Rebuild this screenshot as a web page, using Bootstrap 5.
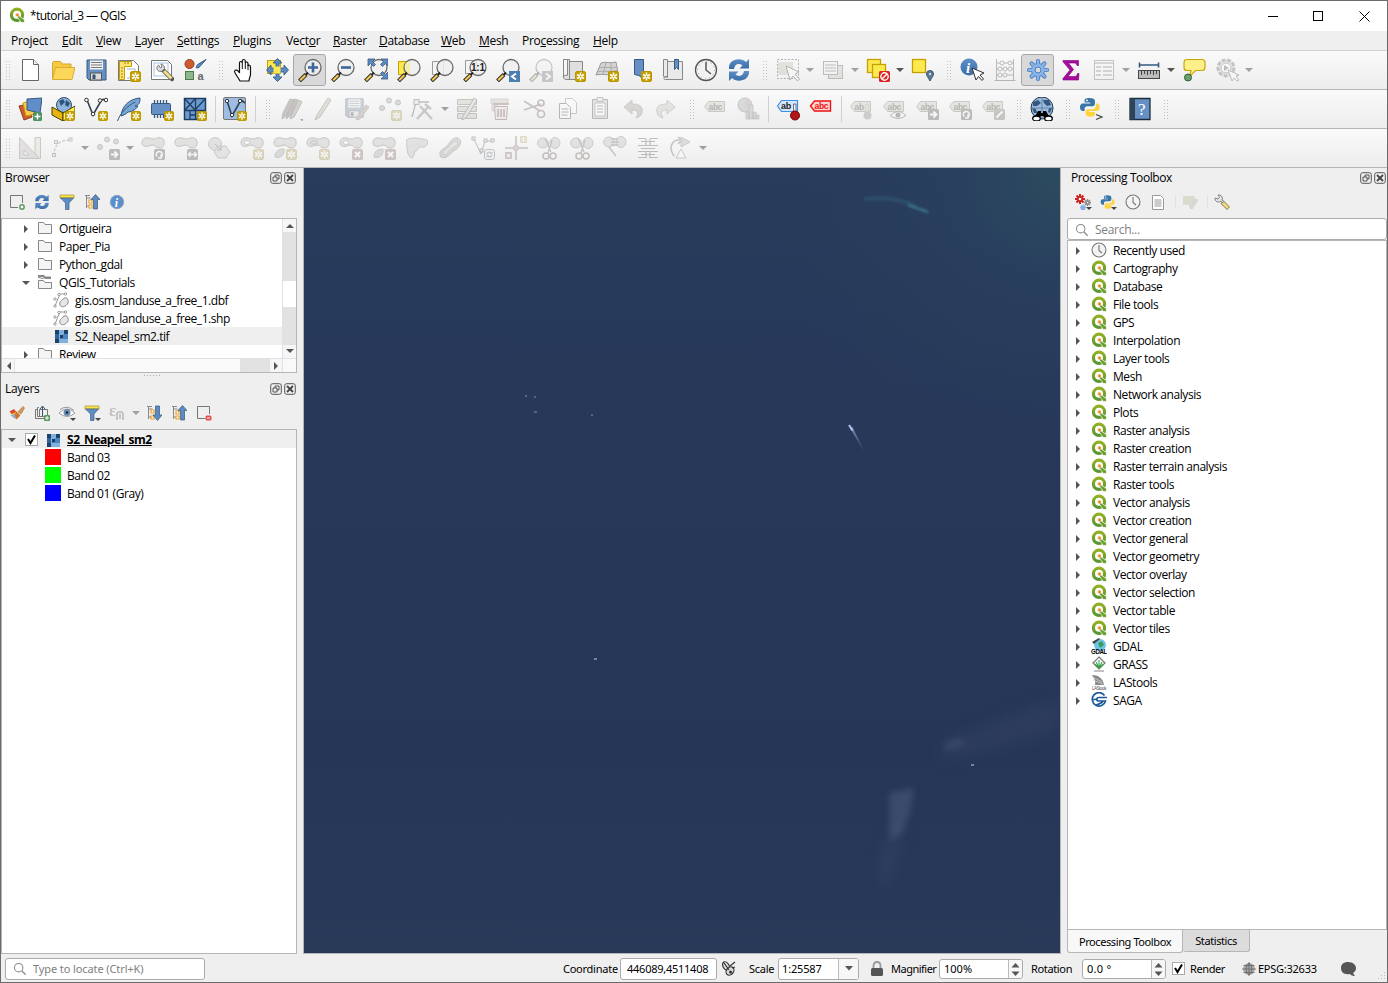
<!DOCTYPE html>
<html lang="en">
<head>
<meta charset="utf-8">
<title>*tutorial_3 — QGIS</title>
<link href="https://cdn.jsdelivr.net/npm/bootstrap@5.3.0/dist/css/bootstrap.min.css" rel="stylesheet">
<style>
html,body{height:983px;overflow:hidden}
body{font:12px/18px "Open Sans","Noto Sans",sans-serif;letter-spacing:-.3px;color:#000;background:#efefef}
.win{width:1388px;height:983px;border:1px solid #6b6b6d}
.titlebar{height:30px;background:#fff;padding-left:8px}
.titlebar .cap{width:46px}
.menubar{height:19px;padding-left:10px;padding-top:1px}
.menubar a{color:#000;text-decoration:none;white-space:nowrap}
.tb{height:39px;border-bottom:1px solid #b6b6b6;background:linear-gradient(#fafafa,#ededed);padding-left:2px}
.tb.first{height:40px;border-top:1px solid #d2d2d2}
.grip{width:16px;height:19px;flex:none;background:repeating-linear-gradient(#c2c2c2 0 1px,transparent 1px 3px) 8px 0/1px 100% no-repeat,repeating-linear-gradient(#c2c2c2 0 1px,transparent 1px 3px) 11px 0/1px 100% no-repeat}
.tb>.grip:first-child{width:10px;background-position:3px 0,6px 0}
.tool{width:33px;height:33px;flex:none;display:flex;align-items:center;justify-content:center}
.tool svg{width:24px;height:24px;overflow:visible}
.tool.on{background:#d9d9d9;border:1px solid #a8a8a8;border-radius:3px;height:32px}
.off{opacity:.34;filter:saturate(.45)}
.dd{width:12px;flex:none;display:flex;justify-content:center}
.dd::after{content:"";border:4px solid transparent;border-top:4px solid #555;border-bottom:0}
.dd.dim::after{border-top-color:#a0a0a0}
.vs{width:7px;height:26px;flex:none;border-left:1px solid #d0d0d0;transform:translateX(4px)}
.ldock{width:302px}
.rdock{width:327px;padding-left:6px;border-left:1px solid #b6b6b6}
.mapview{width:757px;border-left:1px solid #b6b6b6;border-bottom:1px solid #b6b6b6}
.mapview svg{width:756px;height:785px;display:block}
.dhead{height:20px;padding-left:4px}
.dhead svg{width:12px;height:12px;margin-right:2px}
.ldock .dhead svg:last-child{margin-right:7px}
.dtools{height:30px;padding-bottom:2px}
.dtools svg{width:16px;height:16px;flex:none;overflow:visible}
.box{background:#fff;border:1px solid #b6b6b6;overflow:hidden;letter-spacing:-.44px}
.trow{height:18px;white-space:nowrap;display:flex;align-items:center;padding-top:1px}
.trow svg{width:16px;height:16px;flex:none;overflow:visible}
#algs svg,#files svg{margin-top:-1px}
.tw{width:9px;flex:none;display:flex;justify-content:center}
.tw::after{content:"";border:4px solid transparent;border-left:4.5px solid #555;border-right:0}
.tw.open::after{border:4px solid transparent;border-top:4.5px solid #555;border-bottom:0}
.tw.none::after{display:none}
.sb{background:#e2e2e2}
.sbtn{background:#f6f6f6;width:13px;height:14px;display:flex;align-items:center;justify-content:center;flex:none}
.sw{width:16px;height:16px;flex:none;margin-top:-1px}
.chk{width:13px;height:13px;background:#fff;border:1px solid #aaa;flex:none}
.trow .chk svg,.chk svg{width:11px;height:11px;display:block}
.status{height:28px;font:11px/18px "Noto Sans","Open Sans",sans-serif;letter-spacing:-.25px;white-space:nowrap}
.fld{height:22px;background:#fff;border:1px solid #ababab;border-radius:3px;display:flex;align-items:center;overflow:hidden;padding-top:1px}
.spin{width:14px;height:20px;border-left:1px solid #bbb;background:#f7f7f7;margin-top:-1px}
.stab{height:23px;font:11px/21px "Noto Sans","Open Sans",sans-serif;letter-spacing:-.4px;text-align:center;border:1px solid #b6b6b6;border-top:0;border-radius:0 0 3px 3px}
.muted{color:#808080}
</style>
</head>
<body>
<svg width="0" height="0" class="position-absolute">
<defs>
<linearGradient id="gq" x1="0" y1="0" x2="0" y2="1"><stop offset="0" stop-color="#93b023"/><stop offset="1" stop-color="#589632"/></linearGradient>
<linearGradient id="gb" x1="0" y1="0" x2="0" y2="1"><stop offset="0" stop-color="#5d90c8"/><stop offset="1" stop-color="#3a6ba5"/></linearGradient>
<symbol id="star" viewBox="0 0 11 11"><rect x=".5" y=".5" width="10" height="10" rx="1.5" fill="#c4a000" stroke="#b89600"/><path d="M5.500 1.500v8M2 3.500l7 4M9 3.500l-7 4" stroke="#fff" stroke-width="1.500"/><circle cx="5.500" cy="5.500" r=".9" fill="#c4a000"/></symbol>
<symbol id="bx" viewBox="0 0 11 11"><rect width="11" height="11" rx="1.500" fill="#a86868"/><path d="M3 3l5 5M8 3L3 8" stroke="#fff" stroke-width="2"/></symbol>
<symbol id="barr" viewBox="0 0 11 11"><rect width="11" height="11" rx="1.500" fill="#555"/><path d="M2 5.500h6M5.500 2.500l3 3-3 3" stroke="#fff" stroke-width="1.800" fill="none"/></symbol>
<symbol id="brot" viewBox="0 0 11 11"><rect width="11" height="11" rx="1.500" fill="#555"/><path d="M3 7.500A3 3 0 1 1 7 8M7 5.500V9H4" stroke="#fff" stroke-width="1.500" fill="none"/></symbol>
<symbol id="q" viewBox="0 0 16 16"><circle cx="8" cy="7.800" r="5.600" fill="#fff" stroke="url(#gq)" stroke-width="3.200"/><path d="M9.500 8.500l6 4.200v2.800h-3.200L8.300 10z" fill="#6c9f2c" stroke="#fff" stroke-width=".7"/><circle cx="8.300" cy="7.800" r="2" fill="#f9cfa0"/><circle cx="8.500" cy="8" r="1.200" fill="#ee7913"/></symbol>
<symbol id="lens" viewBox="0 0 24 24"><circle cx="15" cy="9.500" r="8" fill="#eee" fill-opacity=".85" stroke="#6a6a6a" stroke-width="1.300"/><path d="M10 14.500l-2.500 2.500" stroke="#222" stroke-width="2"/><path d="M8 16.500L1.500 23" stroke="#333" stroke-width="4"/><path d="M7.300 17.200L2.200 22.300" stroke="#fcc94f" stroke-width="2"/></symbol>
<symbol id="sync" viewBox="0 0 24 24"><path d="M2 11C1 1 14-1 19 4l3-3v9.500h-9.500l3-3c-4-3-8-1-8.500 3.500z" fill="url(#gb)"/><path d="M22 13c1 10-12 12-17 7l-3 3v-9.500h9.500l-3 3c4 3 8 1 8.500-3.500z" fill="url(#gb)"/></symbol>
<symbol id="new" viewBox="0 0 24 24"><path d="M4.500 1.500h11l5 5v16h-16z" fill="#fff" stroke="#666"/><path d="M15.500 1.500v5h5" fill="#eee" stroke="#666"/></symbol>
<symbol id="open" viewBox="0 0 24 24"><path d="M1.500 21V4.500l1-1h7l2 2.500H20v3" fill="#f6c93f" stroke="#d5a52c"/><path d="M1.500 21.500l3-12H24l-3 12z" fill="#fbd859" stroke="#d9ab33"/></symbol>
<symbol id="save" viewBox="0 0 24 24"><path d="M3 2h19v20H5l-2-2z" fill="#6690c3" stroke="#36597f"/><rect x="6" y="2.500" width="13" height="9" fill="#f4f4f4"/><path d="M7 4.500h11M7 7h11M7 9.500h11" stroke="#777"/><rect x="6.500" y="15" width="11" height="7" fill="#dcdcdc" stroke="#555"/><rect x="8.500" y="16.500" width="3" height="4.500" fill="#34536f"/></symbol>
<symbol id="layout" viewBox="0 0 24 24"><path d="M1.500 2.500h15l5 5v15h-20z" fill="#fff" stroke="#777"/><path d="M2.500 3.500h12v5h-7v13h-5z" fill="#fce372" stroke="#c4a000"/><path d="M4 10h2M4 13h2M4 16h2M4 19h2M8 4v2M11 4v2" stroke="#a08000"/><path d="M10 11h8v9h-8" fill="none" stroke="#96b4dc"/><use href="#star" x="13" y="13" width="11" height="11"/></symbol>
<symbol id="layman" viewBox="0 0 24 24"><path d="M1.500 2.500h16l4 4v15h-20z" fill="#fff" stroke="#777"/><rect x="4" y="5" width="14" height="13" fill="none" stroke="#a9bfdf"/><path d="M13 12l9 9" stroke="#555" stroke-width="4.500" stroke-linecap="round"/><path d="M14 13l7.500 7.500" stroke="#f3de84" stroke-width="3"/><path d="M8.500 7a3.500 3.500 0 1 0 5 4.500l1-1A4 4 0 0 0 11 6l1 3-1.500 1z" fill="#ddd" stroke="#777"/></symbol>
<symbol id="style" viewBox="0 0 24 24"><circle cx="6.500" cy="6" r="4.500" fill="#cf5a30" stroke="#8d3e20"/><path d="M13 9.500c1 1 3 0 4-1L23 1.500 15.500 6c-2 1-1.500 2-2.500 3.500z" fill="#5b8ac0" stroke="#36597f"/><rect x="2.500" y="13.500" width="8" height="8" fill="#8fb58f" stroke="#4e7a4e"/><text x="14.500" y="21.500" font-size="11" font-family="Liberation Sans" font-weight="700" fill="#666">a</text></symbol>
<symbol id="hand" viewBox="0 0 24 24"><path d="M8 23C6 19 3 16 2.500 13.500 3 11 6 12 7.500 15V5c0-2 2.500-2 2.800 0V3c0-2 2.700-2 3 0v2c.5-1.500 2.500-1.300 2.700.5V8c.5-1.300 2.500-1 2.500 1v7c0 3-1.500 4-1.500 7z" fill="#fff" stroke="#111" stroke-width="1.200"/><path d="M10.300 5v6M13.300 5v6M16 7v5" stroke="#111"/></symbol>
<symbol id="panmap" viewBox="0 0 24 24"><rect x="2.500" y="2.500" width="13" height="13" fill="#fce94f" stroke="#c4a000"/><path d="M12.500.5L17 5h-3v5h5V7l4.500 5L19 17v-3h-5v5h3l-4.500 4.500L8 19h3v-5H6v3l-4.500-5L6 7v3h5V5H8z" fill="#5b8bc1" stroke="#2f5580" stroke-width=".8"/><path d="M8.500 8.500h7v7h-7z" fill="#fce94f"/></symbol>
<symbol id="zin" viewBox="0 0 24 24"><use href="#lens"/><path d="M15 4.500v10M10 9.500h10" stroke="#3e6798" stroke-width="2.600"/></symbol>
<symbol id="zout" viewBox="0 0 24 24"><use href="#lens"/><path d="M10 9.500h10" stroke="#3e6798" stroke-width="2.600"/></symbol>
<symbol id="zfull" viewBox="0 0 24 24"><use href="#lens"/><path d="M4 1h7L8.500 3.500l3 3-2 2-3-3L4 8zM24 1h-7l2.500 2.500-3 3 2 2 3-3L24 8zM24 21h-7l2.500-2.500-3-3 2-2 3 3L24 14z" fill="#5b8bc1" stroke="#36597f" stroke-width=".8"/></symbol>
<symbol id="zsel" viewBox="0 0 24 24"><path d="M1.500 3.500h11v13h-11z" fill="#fce94f" stroke="#c4a000"/><use href="#lens"/><path d="M9 4.500h4v11c-6-2-6-8-4-11z" fill="#f5ee9c" opacity=".8"/></symbol>
<symbol id="zlay" viewBox="0 0 24 24"><path d="M2.500 3.500h11v13h-11z" fill="#f4f4f4" stroke="#999"/><use href="#lens"/></symbol>
<symbol id="znat" viewBox="0 0 24 24"><path d="M2.500 2.500h11v13h-11z" fill="#f4f4f4" stroke="#999"/><use href="#lens"/><text x="8" y="13" font-size="10" font-weight="700" font-family="Liberation Sans" fill="#222" letter-spacing="-.2">1:1</text></symbol>
<symbol id="zlast" viewBox="0 0 24 24"><use href="#lens"/><rect x="13" y="13" width="11" height="11" fill="#4c7db3"/><path d="M20 15.500l-4 3 4 3" fill="none" stroke="#fff" stroke-width="2"/></symbol>
<symbol id="znext" viewBox="0 0 24 24"><use href="#lens"/><rect x="13" y="13" width="11" height="11" fill="#777"/><path d="M17 15.500l4 3-4 3" fill="none" stroke="#fff" stroke-width="2"/></symbol>
<symbol id="nmap" viewBox="0 0 24 24"><path d="M1.500 1.500h6v20h-3c-4 0-3-4-3-4zM7.500 3.500h13v18h-16" fill="#dfdfdf" stroke="#888"/><path d="M1.500 1.500h4v16c-2-1-4 0-4 2z" fill="#f5f5f5" stroke="#888"/><use href="#star" x="13" y="13" width="11" height="11"/></symbol>
<symbol id="n3d" viewBox="0 0 24 24"><path d="M6 5c5-2 9 1 15-1l2 11c-7 4-14 0-22 2z" fill="#d4d4d4" stroke="#999"/><path d="M4 10c6-2 12 1 18-1M2 14c6-2 13 1 21-2M11 4.500L8 16M16 5v12" stroke="#aaa" fill="none"/><use href="#star" x="13" y="13" width="11" height="11"/></symbol>
<symbol id="nbm" viewBox="0 0 24 24"><path d="M6.500 1.500h9v20l-4.500-4-4.500-1z" fill="#6690c3" stroke="#36597f"/><use href="#star" x="13" y="13" width="11" height="11"/></symbol>
<symbol id="bms" viewBox="0 0 24 24"><path d="M2.500 1.500h4v18c-2-1-4-1-4-1zM6.500 3.500h15v18h-17c-3 0-2-3 2-3z" fill="#e9e9e9" stroke="#888"/><path d="M13.500 1.500h4v10l-2-2-2 2z" fill="#6690c3" stroke="#36597f"/></symbol>
<symbol id="clock" viewBox="0 0 24 24"><circle cx="12" cy="12" r="10.500" fill="#f2f2f2" stroke="#555" stroke-width="1.300"/><path d="M12 4v8l5 4" fill="none" stroke="#555" stroke-width="1.500"/><circle cx="12" cy="12" r="8.500" fill="none" stroke="#6d9dd0" stroke-dasharray="1 3.450"/></symbol>
<symbol id="selr" viewBox="0 0 24 24"><rect x="1.500" y="1.500" width="21" height="19" fill="none" stroke="#333" stroke-dasharray="2 1.500"/><rect x="2" y="4" width="15" height="13" fill="#c5bd95"/><path d="M10 8l4 14 3-4 4.500 5 2-2-4.500-5 4-2z" fill="#fff" stroke="#333"/></symbol>
<symbol id="self" viewBox="0 0 24 24"><rect x="7.500" y="7.500" width="14" height="13" fill="#c9c5a8" stroke="#555"/><rect x="2.500" y="3.500" width="14" height="13" fill="#f2f2f2" stroke="#555"/><path d="M4 7h11M4 10h11M4 13h11" stroke="#555"/></symbol>
<symbol id="desel" viewBox="0 0 24 24"><rect x="1.500" y="1.500" width="13" height="13" fill="#fce94f" stroke="#c4a000" stroke-width="1.300"/><rect x="6.500" y="6.500" width="13" height="13" fill="#fce94f" stroke="#c4a000" stroke-width="1.300"/><rect x="13" y="13" width="11" height="11" rx="1.500" fill="#d22"/><circle cx="18.500" cy="18.500" r="3.700" fill="none" stroke="#fff" stroke-width="1.400"/><path d="M16 21l5-5" stroke="#fff" stroke-width="1.400"/></symbol>
<symbol id="sloc" viewBox="0 0 24 24"><rect x="1.500" y="1.500" width="13" height="13" fill="#fce94f" stroke="#c4a000" stroke-width="1.300"/><path d="M19 23c-2-4-3.500-5-3.500-7a3.500 3.500 0 0 1 7 0c0 2-1.500 3-3.500 7z" fill="#5c7a93" stroke="#3c5870"/><circle cx="19" cy="16" r="1" fill="#fff"/></symbol>
<symbol id="ident" viewBox="0 0 24 24"><circle cx="9" cy="9" r="8.500" fill="url(#gb)"/><text x="6" y="14.500" font-size="15" font-style="italic" font-weight="700" font-family="Liberation Serif" fill="#fff">i</text><path d="M12 10l4 12 2.500-3.500 3.500 4 1.500-1.500-3.500-4 4-2z" fill="#fff" stroke="#333"/></symbol>
<symbol id="abac" viewBox="0 0 24 24"><path d="M3.500 1v21M20.500 1v21M1.500 22.500h21M3.500 5h17M3.500 11h17M3.500 17h17" stroke="#444" fill="none"/><g fill="#fff" stroke="#444"><circle cx="9" cy="5" r="2"/><circle cx="17" cy="5" r="2"/><circle cx="7" cy="11" r="2"/><circle cx="12" cy="11" r="2"/><circle cx="17" cy="11" r="2"/><circle cx="7" cy="17" r="2"/><circle cx="12" cy="17" r="2"/></g></symbol>
<symbol id="gear" viewBox="0 0 24 24"><g stroke="#4a7ec0" stroke-width="4.200" stroke-linecap="round"><path d="M12 3v18M3 12h18M5.600 5.600l12.800 12.800M18.400 5.600L5.600 18.400"/></g><circle cx="12" cy="12" r="7" fill="#4a7ec0"/><g stroke="#8ab4e8" stroke-width="2.400" stroke-linecap="round"><path d="M12 3v18M3 12h18M5.600 5.600l12.800 12.800M18.400 5.600L5.600 18.400"/></g><circle cx="12" cy="12" r="6.200" fill="#8ab4e8"/><circle cx="12" cy="12" r="3" fill="#d9d9d9" stroke="#4a7ec0"/></symbol>
<symbol id="sigma" viewBox="0 0 24 24"><path d="M4 2.500h15.500v5H18C17.500 5 16 5 14 5H9.500l5 6.500L9 18.500h6c2 0 3-.5 3.500-3H20l-.5 6.500H4v-1.500l7-8.500-7-8.200z" fill="#a80aa0" stroke="#7b0476" stroke-width=".6"/></symbol>
<symbol id="table" viewBox="0 0 24 24"><rect x="2.500" y="2.500" width="19" height="19" fill="#f6f6f6" stroke="#666"/><path d="M3 5h19M4 9h5M11 9h9M4 13h5M11 13h9M4 17h5M11 17h9" stroke="#777" stroke-width="1.500"/></symbol>
<symbol id="ruler" viewBox="0 0 24 24"><path d="M2 7h20M2.500 4.500v5M21.500 4.500v5" stroke="#36597f" stroke-width="1.600"/><rect x="1.500" y="12.500" width="21" height="8" fill="#bbb" stroke="#444"/><path d="M4.500 13v4M7.500 13v3M10.500 13v4M13.500 13v3M16.500 13v4M19.500 13v3" stroke="#444"/></symbol>
<symbol id="tip" viewBox="0 0 24 24"><path d="M5 1.500h15q3 0 3 3v5q0 3-3 3h-6.500l-6 6 1.500-6H5q-3 0-3-3v-5q0-3 3-3z" fill="#fdf08a" stroke="#c8a60a" stroke-width="1.200"/><circle cx="6" cy="19.500" r="3.500" fill="#6ba06b" stroke="#345a34"/></symbol>
<symbol id="act" viewBox="0 0 24 24"><circle cx="11" cy="10" r="8" fill="#ccc" stroke="#666" stroke-width="3" stroke-dasharray="4 1.500"/><circle cx="11" cy="10" r="5" fill="#fff" stroke="#666"/><path d="M9 7l5 3-5 3z" fill="#555"/><path d="M13 12l4 11 2-3 3 3 2-1-3-4 3-1z" fill="#fff" stroke="#555"/></symbol>
<symbol id="dsm" viewBox="0 0 24 24"><path d="M1 9l9-2 4 13-8 3z" fill="#cf5a30" stroke="#8d3e20"/><path d="M5 6l10-3 3 14-10 2z" fill="#fcc94f" stroke="#c4a000"/><path d="M9 2l15-1-2 15-13-3z" fill="#5f8fc6" stroke="#36597f"/><rect x="15" y="15" width="9" height="9" rx="1.500" fill="#4f9162"/><path d="M19.500 16.500v6M16.500 19.500h6" stroke="#fff" stroke-width="1.500"/></symbol>
<symbol id="gpkg" viewBox="0 0 24 24"><circle cx="13" cy="8" r="7.500" fill="#8fb4da" stroke="#2d4f73"/><path d="M8 4l4-2 2 3-4 4zM15 3l4 3-2 4-3-2z" fill="#2f527a"/><path d="M1 10l11 6v8L1 18z" fill="#e8b50e" stroke="#4b3c00"/><path d="M24 9l-12 7v8l12-6z" fill="#fcef5b" stroke="#4b3c00"/><use href="#star" x="14" y="14" width="10" height="10"/></symbol>
<symbol id="shp" viewBox="0 0 24 24"><path d="M3 3l6 15L17 4c2-3 4-1 5 0" fill="none" stroke="#333f50" stroke-width="1.600"/><g fill="#fff" stroke="#333"><circle cx="2.500" cy="3" r="1.800"/><circle cx="9" cy="17" r="1.800"/><circle cx="16" cy="3.500" r="1.800"/><circle cx="22" cy="3" r="1.800"/></g><use href="#star" x="14" y="14" width="10" height="10"/></symbol>
<symbol id="feather" viewBox="0 0 24 24"><path d="M4 19C5 9 12 2 23 1c0 5-1 7-5 8l3 0c-3 5-8 6-10 6-2 2-4 3-7 4z" fill="#7aa6d6" stroke="#2f5580"/><path d="M.5 24c3-8 9-15 18-19" stroke="#2f5580" fill="none"/><use href="#star" x="14" y="14" width="10" height="10"/></symbol>
<symbol id="mem" viewBox="0 0 24 24"><path d="M4.500 3v18M7.500 3v18M10.500 3v18M13.500 3v18M16.500 3v18" stroke="#36597f" stroke-width="1.300"/><rect x="1.500" y="6.500" width="19" height="11" rx="1" fill="#6690c3" stroke="#36597f"/><use href="#star" x="14" y="14" width="10" height="10"/></symbol>
<symbol id="virt" viewBox="0 0 24 24"><rect x="1.500" y="1.500" width="21" height="21" fill="#6b9bd1" stroke="#1f3d61" stroke-width="1.500"/><path d="M12.500 2v21M2 13.500h20M2 2l10 11M2 13L12 2M12 13L22 2M7 13v10M7 18h5" fill="none" stroke="#1f3d61" stroke-width="1.300"/><use href="#star" x="14" y="14" width="10" height="10"/></symbol>
<symbol id="virt2" viewBox="0 0 24 24"><rect x=".5" y=".5" width="22" height="22" rx="1.500" fill="#9fbde0" stroke="#777"/><path d="M4 4l5 15L18 3l4 3" fill="none" stroke="#2d4460" stroke-width="1.600"/><g fill="#fff" stroke="#333"><circle cx="4" cy="4" r="1.700"/><circle cx="9" cy="18" r="1.700"/><circle cx="17" cy="4" r="1.700"/></g><use href="#star" x="14" y="14" width="10" height="10"/></symbol>
<symbol id="pens" viewBox="0 0 24 24"><path d="M4 16L11 2l4 1L8 18l-5 4z" fill="#8a6a5a" stroke="#555"/><path d="M8 18L15 2l4 1-7 15-5 4z" fill="#7a5f50" stroke="#555"/><path d="M12 19l8-16 3 2-8 15-4 2z" fill="#a39770" stroke="#555"/><path d="M21 22h6l-3 3z" fill="#222"/></symbol>
<symbol id="pen" viewBox="0 0 24 24"><path d="M5 18L16 1l3 2L8 20l-5 3z" fill="#c2b878" stroke="#666"/></symbol>
<symbol id="saveed" viewBox="0 0 24 24"><use href="#save" x="-2" y="0" width="22" height="22"/><path d="M12 20l9-12 3 2-9 12-4 1z" fill="#b58a7a" stroke="#777"/></symbol>
<symbol id="pts" viewBox="0 0 24 24"><g fill="#aaa" stroke="#666"><circle cx="11" cy="3.500" r="2.500"/><circle cx="20" cy="5.500" r="2.500"/><circle cx="4" cy="11" r="2.500"/></g></symbol>
<symbol id="addpt" viewBox="0 0 24 24"><use href="#pts"/><use href="#star" x="13" y="13" width="11" height="11"/></symbol>
<symbol id="mvpt" viewBox="0 0 24 24"><use href="#pts"/><use href="#barr" x="13" y="13" width="11" height="11"/></symbol>
<symbol id="vert" viewBox="0 0 24 24"><path d="M1 20L5 5h13" fill="none" stroke="#555" stroke-width="1.300"/><rect x="3" y="2.500" width="5" height="5" fill="#ddd" stroke="#555"/><path d="M6 22L17 10M9 9l12 13M14 7l6 5" stroke="#777" stroke-width="2.500"/></symbol>
<symbol id="edattr" viewBox="0 0 24 24"><path d="M1.500 2.500h19v5h-19zM1.500 9.500h19v5h-19zM1.500 16.500h19v5h-19z" fill="#c8c39f" stroke="#666"/><path d="M7 19L18 1l3 2L10 21l-4 2z" fill="#ccc" stroke="#555"/></symbol>
<symbol id="trash" viewBox="0 0 24 24"><path d="M2 2h17v5H2zM3 8h5v6H3z" fill="#c8c39f" stroke="#999"/><path d="M5.500 9.500h13l-1 13h-11z" fill="#ddd" stroke="#a33"/><path d="M4 7h16M9 12v8M12 12v8M15 12v8" stroke="#a33" stroke-width="1.500"/></symbol>
<symbol id="cut" viewBox="0 0 24 24"><path d="M2 4l16 10M2 13l17-6" stroke="#666" stroke-width="1.800"/><circle cx="19" cy="6" r="3" fill="none" stroke="#855" stroke-width="1.700"/><circle cx="19" cy="17" r="3.500" fill="none" stroke="#855" stroke-width="1.700"/></symbol>
<symbol id="copy" viewBox="0 0 24 24"><path d="M10.500 1.500h7l4 4v11h-11z" fill="#fff" stroke="#777"/><path d="M4.500 6.500h7l4 4v11h-11z" fill="#fff" stroke="#444"/><path d="M6.500 12h7M6.500 15h7M6.500 18h6" stroke="#444"/></symbol>
<symbol id="paste" viewBox="0 0 24 24"><path d="M4.500 2.500h15v19h-15z" fill="#c9c5b0" stroke="#444"/><path d="M7 6h10v13H7z" fill="#fff" stroke="#777"/><path d="M9 .5h6v4H9z" fill="#ddd" stroke="#666"/><path d="M9 9h6M9 12h6M9 15h6" stroke="#444"/></symbol>
<symbol id="undo" viewBox="0 0 24 24"><path d="M3 10l8-7v4c7 0 11 2 10 8-.5 4-3 5-6 6 3-5 2-8-4-8v4z" fill="#b5978a" stroke="#876"/></symbol>
<symbol id="redo" viewBox="0 0 24 24"><path d="M21 10l-8-7v4C6 7 2 9 3 15c.5 4 3 5 6 6-3-5-2-8 4-8v4z" fill="#bcc5b8" stroke="#787"/></symbol>
<symbol id="tag" viewBox="0 0 24 24"><path d="M1.500 9.500l4-5h16v10h-16z" fill="#cbc69f" stroke="#777"/><text x="5.500" y="12.500" font-size="8.500" font-weight="700" font-family="Liberation Sans" fill="#333">abc</text></symbol>
<symbol id="tagab" viewBox="0 0 24 24"><path d="M1.500 9.500l4-5h16v10h-16z" fill="#cbc69f" stroke="#777"/><text x="5.500" y="12.500" font-size="8.500" font-weight="700" font-family="Liberation Sans" fill="#333">ab</text><path d="M17 7h2v9h-2z" fill="#eee" stroke="#666" stroke-width=".7"/><circle cx="18.500" cy="18.500" r="4" fill="#888"/></symbol>
<symbol id="tagblue" viewBox="0 0 24 24"><path d="M1.500 9l4-5.500h16v11h-16z" fill="#d3e6fb" stroke="#3b8fee" stroke-width="1.200"/><text x="5" y="12" font-size="9" font-weight="700" font-family="Liberation Sans" fill="#222">ab</text><path d="M17.500 7h2.500v9h-2.500z" fill="#eee" stroke="#444" stroke-width=".7"/><circle cx="19" cy="18.500" r="4.500" fill="#b01818" stroke="#700"/></symbol>
<symbol id="tagred" viewBox="0 0 24 24"><path d="M1.500 9l4-5h16v10h-16z" fill="#fbd5d5" stroke="#e11" stroke-width="1.400"/><text x="5.500" y="12" font-size="8.500" font-weight="700" font-family="Liberation Sans" fill="#e11">abc</text></symbol>
<symbol id="tageye" viewBox="0 0 24 24"><use href="#tag"/><path d="M8 18.500q8-8 16 0-8 6-16 0z" fill="#fff" stroke="#444"/><circle cx="16" cy="18" r="2.500" fill="#444"/></symbol>
<symbol id="tagarr" viewBox="0 0 24 24"><use href="#tag"/><use href="#barr" x="13" y="12" width="11" height="11"/></symbol>
<symbol id="tagrot" viewBox="0 0 24 24"><use href="#tag"/><use href="#brot" x="13" y="12" width="11" height="11"/></symbol>
<symbol id="taged" viewBox="0 0 24 24"><use href="#tag"/><rect x="13" y="12" width="11" height="11" rx="1.500" fill="#7a744f"/><path d="M15.500 20.500l6-6" stroke="#fff" stroke-width="2"/></symbol>
<symbol id="diag" viewBox="0 0 24 24"><circle cx="9" cy="8" r="7" fill="#96aa90" stroke="#666"/><path d="M9 8V1a7 7 0 0 1 5.500 11z" fill="#b58a8a"/><path d="M13 8h4v14h-4zM17 15h3v7h-3zM20 18h3v4h-3zM10 15h3v7h-3z" fill="#9aa" stroke="#666" stroke-width=".7"/></symbol>
<symbol id="meta" viewBox="0 0 24 24"><circle cx="12" cy="11" r="11" fill="#9dbadb" stroke="#20394f"/><path d="M3 5l5-2 3 3-4 3-4 0zM13 3l6 0 2 5-4 1-3-3zM2 11l4 1 1 4-3 0zM19 11l3 0-2 5-2-1z" fill="#33577f"/><path d="M1 11h22M12 0v22" fill="none" stroke="#4b7097" stroke-width=".7"/><path d="M4 21l4-7h3v2h2v-2h3l4 7-3 2-4-4h-2l-4 4z" fill="#000"/><ellipse cx="6.500" cy="21.500" rx="3.800" ry="2.500" fill="#fff" stroke="#000" stroke-width="1.300"/><ellipse cx="18.500" cy="21.500" rx="3.800" ry="2.500" fill="#fff" stroke="#000" stroke-width="1.300"/></symbol>
<symbol id="py" viewBox="0 0 24 24"><path d="M11 2c-4 0-5 1-5 3v2h6v1H4c-2 0-3 2-3 4s1 4 3 4h2v-2c0-2 1-3 3-3h5c2 0 3-1 3-3V5c0-2-2-3-6-3z" fill="#3a76a8"/><circle cx="8.500" cy="4.700" r="1" fill="#fff"/><path d="M12 22c4 0 5-1 5-3v-2h-6v-1h8c2 0 3-2 3-4s-1-4-3-4h-1v2c0 2-1 4-3 4h-5c-2 0-3 1-3 3v2c0 2 2 3 5 3z" fill="#ffd43b"/></symbol>
<symbol id="pyc" viewBox="0 0 24 24"><use href="#py" x="0" y="-1" width="22.500" height="22.500"/><path d="M17 17.500l6 2.500-6 2.500" fill="none" stroke="#444" stroke-width="1.300"/></symbol>
<symbol id="help" viewBox="0 0 24 24"><path d="M2 1.500h20v21H2z" fill="#6690c3" stroke="#1c2c3c" stroke-width="1.300"/><path d="M2 1.500h5v21H2z" fill="#2f4457"/><text x="10" y="18" font-size="17" font-family="Liberation Serif" fill="#fff">?</text></symbol>
<symbol id="tri" viewBox="0 0 24 24"><path d="M17 1.500h5.500v21H17z" fill="#ded8ac" stroke="#777"/><path d="M1.500 1.500l20 21h-20z" fill="#cbbab0" stroke="#777"/><path d="M6 14l5 5H6z" fill="#fff" stroke="#777"/></symbol>
<symbol id="curve" viewBox="0 0 24 24"><path d="M3 20C3 9 8 4 20 4" fill="none" stroke="#777" stroke-dasharray="3 1.500" stroke-width="1.300"/><g fill="#ddd" stroke="#666"><rect x="1.500" y="17.500" width="3" height="3"/><rect x="3.500" y="4.500" width="3" height="3"/><rect x="18" y="2" width="3" height="3"/></g></symbol>
<symbol id="blob" viewBox="0 0 24 24"><path d="M1 6C2 0 8 2 12 3c4 0 6-3 10 0 3 4 0 10-4 9-4 0-3-3-7-3-4 1-5 2-8 1C1 9 1 8 1 6z" fill="#b9c0b4" stroke="#666"/></symbol>
<symbol id="blrot" viewBox="0 0 24 24"><use href="#blob"/><use href="#brot" x="13" y="13" width="11" height="11"/></symbol>
<symbol id="blsc" viewBox="0 0 24 24"><use href="#blob"/><rect x="13" y="13" width="11" height="11" rx="1.500" fill="#555"/><path d="M14 18.500h9M16.500 16l-2 2.500 2 2.500M20.500 16l2 2.500-2 2.500" stroke="#fff" stroke-width="1.300" fill="none"/></symbol>
<symbol id="simp" viewBox="0 0 24 24"><circle cx="8" cy="8" r="6.500" fill="#b9c0b4" stroke="#777"/><path d="M11 10h8l4 6-4 6h-8l-4-6z" fill="#c5cac0" stroke="#777"/><path d="M8 8l6 6m0-4v4h-4" fill="none" stroke="#555"/></symbol>
<symbol id="ring" viewBox="0 0 24 24"><use href="#blob"/><ellipse cx="7" cy="6.500" rx="3" ry="2" fill="#fff" stroke="#777"/><use href="#star" x="13" y="13" width="11" height="11"/></symbol>
<symbol id="part" viewBox="0 0 24 24"><use href="#blob"/><path d="M2 21c0-6 4-8 9-8 1 6-4 10-9 8z" fill="#a5b09f" stroke="#777"/><use href="#star" x="13" y="13" width="11" height="11"/></symbol>
<symbol id="fill" viewBox="0 0 24 24"><use href="#blob"/><ellipse cx="8" cy="6.500" rx="4" ry="2" fill="#aaa" stroke="#777"/><use href="#star" x="13" y="13" width="11" height="11"/></symbol>
<symbol id="dring" viewBox="0 0 24 24"><use href="#blob"/><ellipse cx="7" cy="6.500" rx="3" ry="2" fill="#fff" stroke="#777"/><use href="#bx" x="13" y="13" width="11" height="11"/></symbol>
<symbol id="dpart" viewBox="0 0 24 24"><use href="#blob"/><path d="M2 21c0-6 4-8 9-8 1 6-4 10-9 8z" fill="#a5b09f" stroke="#777"/><use href="#bx" x="13" y="13" width="11" height="11"/></symbol>
<symbol id="resh" viewBox="0 0 24 24"><path d="M1.500 4C6 0 18 3 22 4c2 4-1 8-6 7-4 0-2 4-6 4-1 3-1 6-3 7C2 20 2 14 1.500 4z" fill="#b9c0b4" stroke="#777"/></symbol>
<symbol id="offs" viewBox="0 0 24 24"><path d="M3 21c-4-6 3-8 6-11s5-9 11-8c5 3 2 9-3 12s-8 10-14 7z" fill="#a9ad98" stroke="#666"/><path d="M5.500 19c-2-4 2-5 5-8s4-6 8.500-6c2 2 0 5-4 7s-5.500 8-9.500 7z" fill="#c5c9be" stroke="#777"/></symbol>
<symbol id="splv" viewBox="0 0 24 24"><path d="M3 3l7 15 4-13h8" fill="none" stroke="#555"/><g fill="#ddd" stroke="#555"><rect x="1" y="1" width="3" height="3"/><rect x="9" y="13" width="3" height="3"/><rect x="13" y="3" width="3" height="3"/><rect x="20" y="3" width="3" height="3"/></g><rect x="13.500" y="13.500" width="10" height="10" rx="2" fill="#eee" stroke="#666"/><use href="#sync" x="15" y="15" width="7" height="7"/></symbol>
<symbol id="merge" viewBox="0 0 24 24"><path d="M12 0v10M1 12h9M14 12h10M12 14v10" stroke="#666" stroke-width="1.500"/><rect x="10" y="10" width="4" height="4" fill="#d99" stroke="#a66"/><use href="#star" x="16" y="0" width="7" height="7"/><use href="#bx" x="1" y="16" width="7" height="7"/></symbol>
<symbol id="split" viewBox="0 0 24 24"><ellipse cx="6" cy="7" rx="5.500" ry="5" fill="#b9c0b4" stroke="#777"/><ellipse cx="18" cy="7" rx="5" ry="5.500" fill="#b9c0b4" stroke="#777"/><path d="M8 2l6 14M15 4l-4 13" stroke="#666" stroke-width="1.300"/><circle cx="9" cy="20" r="3" fill="none" stroke="#855" stroke-width="1.500"/><circle cx="16" cy="20" r="3" fill="none" stroke="#855" stroke-width="1.500"/></symbol>
<symbol id="mfeat" viewBox="0 0 24 24"><ellipse cx="6" cy="6" rx="5.500" ry="5" fill="#b9c0b4" stroke="#777"/><ellipse cx="18" cy="6" rx="5" ry="5.500" fill="#b9c0b4" stroke="#777"/><path d="M8 6h8M8 3h7M8 9h7M6 11l7 9" stroke="#666" stroke-width="1.300"/></symbol>
<symbol id="mattr" viewBox="0 0 24 24"><path d="M2 2.500h8M14 2.500h8M2 9.500h20M2 15.500h20M2 21.500h8M14 21.500h8M5 5.500h14M5 12.500h14M5 18.500h14M10 3v6M14 3v6M10 16v6M14 16v6" stroke="#555" stroke-width="1.200"/></symbol>
<symbol id="rotpt" viewBox="0 0 24 24"><path d="M5 20C-1 12 3 3 11 4M9 1l4 3-4 4" fill="none" stroke="#666" stroke-width="1.500"/><path d="M12 1l9 5-9 5z" fill="#aaa" stroke="#777"/><path d="M12 13l5 9H7z" fill="#fff" stroke="#777"/></symbol>
<!-- 16px dock icons -->
<symbol id="d-add" viewBox="0 0 16 16"><path d="M13.500 9V1.500h-12v12H9" fill="none" stroke="#777"/><circle cx="13" cy="13" r="2.900" fill="#5a9a5f"/><circle cx="13" cy="13" r="1.400" fill="#fff"/></symbol>
<symbol id="d-filter" viewBox="0 0 16 16"><path d="M1 1h14v3H1z" fill="#fbe34e" stroke="#a09030" stroke-width=".7"/><path d="M1.500 4h13L10 9v6.500H6.500V9z" fill="#5d8ec6" stroke="#44607c" stroke-width=".7"/></symbol>
<symbol id="d-up" viewBox="0 0 16 16"><path d="M2.500 1v13M2.500 4h4M2.500 12h4M1 1.500h5" stroke="#888" fill="none"/><path d="M5 6h3v3H5zM5 11h3v3H5z" fill="#fff" stroke="#f0a030" stroke-width="1.200"/><path d="M11.500.5L16 5.500h-2.500V15h-4V5.500H7z" fill="#5b8bc1" stroke="#36597f" stroke-width=".7"/></symbol>
<symbol id="d-down" viewBox="0 0 16 16"><path d="M2.500 1v13M2.500 4h4M2.500 12h4M1 1.500h5" stroke="#888" fill="none"/><path d="M5 5h3v3H5zM5 11h3v3H5z" fill="#fff" stroke="#f0a030" stroke-width="1.200"/><path d="M11.500 15.500L16 10h-2.500V1h-4v9H7z" fill="#5b8bc1" stroke="#36597f" stroke-width=".7"/></symbol>
<symbol id="d-info" viewBox="0 0 16 16"><circle cx="8" cy="8" r="6.700" fill="#5a8fcc" stroke="#8fa6c0" stroke-width="1"/><text x="5.800" y="12.500" font-size="12" font-style="italic" font-weight="700" font-family="Liberation Serif" fill="#fff">i</text></symbol>
<symbol id="d-brush" viewBox="0 0 16 16"><path d="M9 7l5-5.500L15.500 3 12 9z" fill="#d89a52" stroke="#a06a30" stroke-width=".6"/><path d="M.5 7L6 5l4 5-4 4z" fill="#f5cf3b"/><path d="M.5 6.500L5 4l2 3-4 2z" fill="#e0433a"/><path d="M1.500 10l4-1 3 5-4-1z" fill="#8fb4e6"/><path d="M7 6l4.500 4.500-4 4-2-4z" fill="#c9792c"/></symbol>
<symbol id="d-grp" viewBox="0 0 16 16"><path d="M3 4.500H1.500v9H11M5 2.500H3.500v9H12M5.500 4.500h8v7h-8z" fill="none" stroke="#777"/><path d="M8.500 11V1.500M6 4l2.500-3L11 4" fill="none" stroke="#34536f"/><rect x="10" y="10" width="6" height="6" rx="1" fill="#5a9a5f"/><path d="M13 11v4M11 13h4" stroke="#fff"/></symbol>
<symbol id="d-eye" viewBox="0 0 16 16"><path d="M0 8q8-8 16 0-8 7-16 0z" fill="#fff" stroke="#888" stroke-width=".8"/><circle cx="8" cy="7.500" r="3.500" fill="#6c8fb3"/><circle cx="8" cy="7.500" r="1.300" fill="#223"/><path d="M1 4.500q7-5 14 1" fill="none" stroke="#999"/></symbol>
<symbol id="d-eps" viewBox="0 0 16 16"><text x="0" y="11" font-size="17" font-family="Liberation Serif" font-weight="700" fill="#666">ε</text><path d="M8 15V9q0-2 3-2t3 2v6M11 9v5" fill="none" stroke="#777" stroke-width="2"/></symbol>
<symbol id="d-rem" viewBox="0 0 16 16"><path d="M13.500 9V1.500h-12v12H9" fill="none" stroke="#777"/><rect x="9.500" y="10.500" width="6" height="5" rx="1.500" fill="#e34f4f"/><path d="M11 13h3" stroke="#fff"/></symbol>
<symbol id="d-folder" viewBox="0 0 16 16"><path d="M1.500 13.500v-11h5l1.500 2h6.500v9z" fill="#f4f4f4" stroke="#888"/></symbol>
<symbol id="d-fopen" viewBox="0 0 16 16"><path d="M1 1h6l1 1.500h6V5H1z" fill="#888"/><path d="M1.500 14.500v-8h5l1.500 2h6.500v6z" fill="#f4f4f4" stroke="#888"/><path d="M1 4.500l5-1 2 2h6" stroke="#fff" fill="none"/></symbol>
<symbol id="d-vec" viewBox="0 0 16 16"><path d="M2 14L6.500 3M6.500 2h6" stroke="#999" fill="none"/><path d="M10 7c3-3 6 0 5 4-2 4-7 5-8 2s1-4 3-6z" fill="#e6e6e6" stroke="#888"/><g fill="#fff" stroke="#888" stroke-width=".8"><circle cx="2" cy="7" r="1.200"/><circle cx="6" cy="2.500" r="1.200"/><circle cx="12.500" cy="2" r="1.200"/><circle cx="2" cy="14" r="1.200"/></g></symbol>
<symbol id="d-ras" viewBox="0 0 16 16"><path d="M2 2h13v13H2z" fill="#7fb0de"/><path d="M2 2h4v4H2zM7 7h3.500v3.500H7zM11 2h4v4h-4zM2 11h4v4H2z" fill="#1d4168"/><path d="M2 6h4v5H2z" fill="#2f649a"/><path d="M10.500 6H15v5h-4.500z" fill="#4a86c2"/></symbol>
<symbol id="d-gears" viewBox="0 0 16 16"><path d="M5 0v10M0 5h10M1.500 1.500l7 7M8.500 1.500l-7 7" stroke="#cf2020" stroke-width="2"/><circle cx="5" cy="5" r="3" fill="#cf2020"/><circle cx="5" cy="5" r="1.300" fill="#fff"/><path d="M12.500 5v7M9 8.500h7M10 6l5 5M15 6l-5 5" stroke="#888" stroke-width="1.300"/><circle cx="12.500" cy="8.500" r="1.800" fill="#888"/><circle cx="12.500" cy="8.500" r=".8" fill="#fff"/><path d="M8 10.500v6M5 13.500h6M6 11.500l4 4M10 11.500l-4 4" stroke="#8ab0e8" stroke-width="1.300"/><circle cx="8" cy="13.500" r="1.800" fill="#8ab0e8"/></symbol>
<symbol id="d-clock" viewBox="0 0 16 16"><circle cx="8" cy="8" r="7" fill="#f3f3f3" stroke="#777" stroke-width="1.100"/><path d="M8 3v5.500l3 2.500" fill="none" stroke="#777" stroke-width="1.100"/></symbol>
<symbol id="d-doc" viewBox="0 0 16 16"><path d="M2.500 1.500h8l3 3v11h-11z" fill="#fff" stroke="#999"/><path d="M4.500 6h7M4.500 8h7M4.500 10h7M4.500 12h7" stroke="#999"/></symbol>
<symbol id="d-note" viewBox="0 0 16 16"><path d="M1 2h12v8l-3 1-3 3v-3H1z" fill="#c8c7b0"/><path d="M8 14l6-9 2 1-6 9z" fill="#ccc" stroke="#999" stroke-width=".6"/></symbol>
<symbol id="d-wrench" viewBox="0 0 16 16"><path d="M8 8l6.500 6.500" stroke="#84733a" stroke-width="4"/><path d="M8.500 8.500l5.500 5.500" stroke="#f0dd8a" stroke-width="2.600"/><path d="M1 4a3.500 3.500 0 0 0 6 3l1.500 2L10 7.500 8 6A3.500 3.500 0 0 0 4 1l1.500 2.500L4 5z" fill="#e6e6e6" stroke="#777" stroke-width=".9"/></symbol>
<symbol id="d-mag" viewBox="0 0 16 16"><circle cx="6.500" cy="6.500" r="4.800" fill="none" stroke="#8a8a8a" stroke-width="1.200"/><path d="M10 10l4.500 4.500" stroke="#8a8a8a" stroke-width="1.500"/></symbol>
<symbol id="d-gdal" viewBox="0 0 16 16"><circle cx="9" cy="7" r="6" fill="#6cc5e8"/><path d="M7 5l4-2 2 4-4 3z" fill="#3c9a5c"/><path d="M1 4l7-4 1 1-6 5z" fill="#444"/><text x="0" y="16" font-size="8" font-weight="700" font-family="Liberation Sans" textLength="16" lengthAdjust="spacingAndGlyphs" fill="#000">GDAL</text></symbol>
<symbol id="d-grass" viewBox="0 0 16 16"><path d="M8 1l6 6-6 6-6-6z" fill="#fff" stroke="#777" stroke-width="1.200"/><path d="M8 13V4M8 12L5 6M8 12l3-6M8 12L3.500 8M8 12l4.500-4" stroke="#3ca04c" stroke-width="1.100"/><path d="M3 15h10" stroke="#888"/></symbol>
<symbol id="d-las" viewBox="0 0 16 16"><path d="M1 1c6 0 11 3 12 10H4c1-4-1-7-3-10z" fill="#888"/><path d="M1 3l10 5M2 6l10 4" stroke="#ddd" stroke-width=".7"/><text x="1" y="16" font-size="4.500" textLength="14" font-family="Liberation Sans" fill="#555">LAStools</text></symbol>
<symbol id="d-saga" viewBox="0 0 16 16"><path d="M13.500 3.500A6.700 6.700 0 1 0 14.500 9H8c-3 0-3-3.500 0-3.500h8M5 13c4-1 6-2 7-4M1 8l5-1" fill="none" stroke="#1d5a9a" stroke-width="1.700"/></symbol>
<symbol id="d-float" viewBox="0 0 12 12"><rect x=".7" y=".7" width="10.600" height="10.600" rx="2" fill="none" stroke="#555"/><path d="M3 5h4v4H3zM5 5V3h4v4H7" fill="none" stroke="#555"/></symbol>
<symbol id="d-close" viewBox="0 0 12 12"><rect x=".7" y=".7" width="10.600" height="10.600" rx="2" fill="none" stroke="#555"/><path d="M3 3l6 6M9 3L3 9" stroke="#444" stroke-width="1.800"/></symbol>
</defs>
</svg>

<div class="win d-flex flex-column">
  <header class="titlebar d-flex align-items-center flex-shrink-0">
    <svg width="16" height="16" style="margin-top:-2px"><use href="#q"/></svg>
    <span class="me-auto" style="margin-left:5px;letter-spacing:-.55px">*tutorial_3 — QGIS</span>
    <span class="cap d-flex justify-content-center"><svg width="11" height="11"><path d="M1 5.500h10" stroke="#000"/></svg></span>
    <span class="cap d-flex justify-content-center"><svg width="11" height="11"><rect x=".5" y=".5" width="9" height="9" fill="none" stroke="#000"/></svg></span>
    <span class="cap d-flex justify-content-center"><svg width="11" height="11"><path d="M.5.5l10 10M10.500.5l-10 10" stroke="#000"/></svg></span>
  </header>
  <nav class="menubar d-flex align-items-center flex-shrink-0" id="menu"></nav>
  <div class="tb first d-flex align-items-center flex-shrink-0" data-tools="| new open save layout layman style | hand panmap zin! zout zfull zsel zlay znat zlast znext- nmap n3d nbm bms clock sync | selr-v self-v deselv sloc | ident abac- gear! sigma table-v rulerv tip act-v"></div>
  <div class="tb d-flex align-items-center flex-shrink-0" data-tools="| dsm gpkg shp feather mem virt / virt2 / | pens- pen- saveed- addpt- vert-v edattr- trash- cut- copy- paste- undo- redo- | tag- diag- / tagblue tagred / tagab- tageye- tagarr- tagrot- taged- | meta | pyc | help |"></div>
  <div class="tb d-flex align-items-center flex-shrink-0" data-tools="| tri- curve-v mvpt-v blrot- blsc- simp- ring- part- fill- dring- dpart- resh- offs- splv- merge- split- split- mfeat- mattr- rotpt-v"></div>

  <main class="d-flex flex-grow-1" style="min-height:0">
    <section class="ldock d-flex flex-column flex-shrink-0">
      <div class="dhead d-flex align-items-center flex-shrink-0"><span class="me-auto">Browser</span><svg><use href="#d-float"/></svg><svg><use href="#d-close"/></svg></div>
      <div class="dtools d-flex align-items-center ps-2 flex-shrink-0" style="gap:9px">
        <svg><use href="#d-add"/></svg><svg><use href="#sync"/></svg><svg><use href="#d-filter"/></svg><svg><use href="#d-up"/></svg><svg><use href="#d-info"/></svg>
      </div>
      <div class="box d-flex flex-column flex-shrink-0" style="width:296px;height:155px">
        <div class="d-flex" style="height:139px">
          <div class="flex-grow-1 overflow-hidden" id="files"></div>
          <div class="sb d-flex flex-column border-start" style="width:14px">
            <div class="sbtn border-bottom"><svg width="8" height="5"><path d="M0 5l4-4 4 4z" fill="#555"/></svg></div>
            <div style="height:47px"></div><div class="bg-white border-top border-bottom" style="height:28px"></div><div class="flex-grow-1"></div>
            <div class="sbtn border-top"><svg width="8" height="5"><path d="M0 0l4 4 4-4z" fill="#555"/></svg></div>
          </div>
        </div>
        <div class="d-flex border-top" style="height:15px">
          <div class="sbtn border-end"><svg width="5" height="8"><path d="M5 0L1 4l4 4z" fill="#555"/></svg></div>
          <div style="width:226px;background:#fafafa" class="border-end"></div><div class="sb flex-grow-1"></div>
          <div class="sbtn border-start"><svg width="5" height="8"><path d="M0 0l4 4-4 4z" fill="#555"/></svg></div>
          <div style="width:14px" class="border-start bg-light"></div>
        </div>
      </div>
      <div class="d-flex justify-content-center flex-shrink-0" style="height:6px"><svg width="16" height="4"><path d="M0 2.500h16" stroke="#aaa" stroke-dasharray="1 2"/></svg></div>
      <div class="dhead d-flex align-items-center flex-shrink-0"><span class="me-auto">Layers</span><svg><use href="#d-float"/></svg><svg><use href="#d-close"/></svg></div>
      <div class="dtools d-flex align-items-center ps-2 flex-shrink-0" style="gap:9px">
        <svg><use href="#d-brush"/></svg><svg><use href="#d-grp"/></svg><svg><use href="#d-eye"/><path d="M11 13h6l-3 3z" fill="#444"/></svg><svg><use href="#d-filter"/><path d="M11 13h6l-3 3z" fill="#444"/></svg><svg class="off"><use href="#d-eps"/></svg><span class="dd dim" style="margin:0 -5px 0 -4px"></span><svg><use href="#d-down"/></svg><svg><use href="#d-up"/></svg><svg><use href="#d-rem"/></svg>
      </div>
      <div class="box flex-grow-1" style="width:296px">
        <div class="trow" style="background:#efefef;padding-left:5px"><span class="tw open"></span><span class="chk" style="margin:-1px 7px 0 9px"><svg viewBox="0 0 11 11"><path d="M2 5l2.500 4L9 1.500" fill="none" stroke="#000" stroke-width="2"/></svg></span><svg><use href="#d-ras"/></svg><b class="text-decoration-underline" style="margin-left:6px">S2_Neapel_sm2</b></div>
        <div class="trow" style="padding-left:43px"><span class="sw" style="background:red;margin-right:6px"></span>Band 03</div>
        <div class="trow" style="padding-left:43px"><span class="sw" style="background:lime;margin-right:6px"></span>Band 02</div>
        <div class="trow" style="padding-left:43px"><span class="sw" style="background:blue;margin-right:6px"></span>Band 01 (Gray)</div>
      </div>
    </section>

    <section class="mapview flex-shrink-0">
      <svg viewBox="0 0 756 785">
        <defs>
          <radialGradient id="m1" cx="1" cy="0" r=".4"><stop offset="0" stop-color="#2c4c60"/><stop offset=".35" stop-color="#29425e" stop-opacity=".7"/><stop offset="1" stop-color="#283b5b" stop-opacity="0"/></radialGradient>
          <linearGradient id="m0" x1="0" y1="0" x2="0" y2="1"><stop offset="0" stop-color="#283c5c"/><stop offset=".3" stop-color="#273859"/><stop offset=".75" stop-color="#263657"/><stop offset="1" stop-color="#283a58"/></linearGradient>
          <filter id="bl" x="-50%" y="-50%" width="200%" height="200%"><feGaussianBlur stdDeviation="7"/></filter>
          <filter id="bm" x="-50%" y="-50%" width="200%" height="200%"><feGaussianBlur stdDeviation="3"/></filter>
          <filter id="bs" x="-50%" y="-50%" width="200%" height="200%"><feGaussianBlur stdDeviation="1"/></filter>
          <linearGradient id="wk" x1="0" y1="0" x2="1" y2="1"><stop offset="0" stop-color="#7d8cb8"/><stop offset="1" stop-color="#7d8cb8" stop-opacity="0"/></linearGradient>
        </defs>
        <rect width="756" height="785" fill="url(#m0)"/>
        <rect width="756" height="785" fill="url(#m1)"/>
        <path d="M640 575l60-25 56-20v30l-60 20-60 12z" fill="#3a4a6a" opacity=".35" filter="url(#bl)"/>
        <path d="M575 700l14-45 10 0-8 40-10 30z" fill="#3f4e70" opacity=".35" filter="url(#bl)"/>
        <path d="M585 625l25-5-4 25-8 20-12 8z" fill="#4c5b7c" opacity=".55" filter="url(#bm)"/>
        <path d="M640 575l18-6 2 8-18 6z" fill="#4c5b7c" opacity=".4" filter="url(#bm)"/>
        <path d="M560 31q35-3 52 8" stroke="#33607a" stroke-width="4" fill="none" filter="url(#bs)" opacity=".5"/>
        <path d="M604 37l20 7" stroke="#3b7088" stroke-width="2.500" filter="url(#bs)"/>
        <path d="M546 260l2.500-1 13 27z" fill="url(#wk)"/>
        <path d="M545 257l3.500 5.500" stroke="#b4c2ee" stroke-width="2"/>
        <g fill="#6f86a5"><path d="M221 227h2v2h-2zM230 228h2v2h-2zM230 243h3v2h-3zM287 246h2v2h-2z" opacity=".6"/><path d="M290 490h3v2h-3zM667 596h3v2h-3z"/></g>
      </svg>
    </section>

    <section class="rdock d-flex flex-column flex-shrink-0">
      <div class="dhead d-flex align-items-center flex-shrink-0"><span class="me-auto" style="letter-spacing:-.4px">Processing Toolbox</span><svg><use href="#d-float"/></svg><svg style="margin-right:1px"><use href="#d-close"/></svg></div>
      <div class="dtools d-flex align-items-center ps-2 flex-shrink-0" style="gap:9px">
        <svg><use href="#d-gears"/><path d="M11 13h6l-3 3z" fill="#444"/></svg><svg><use href="#py"/><path d="M11 13h6l-3 3z" fill="#444"/></svg><svg><use href="#d-clock"/></svg><svg><use href="#d-doc"/></svg><span class="border-start" style="height:12px;margin-right:-3px"></span><svg style="opacity:.5"><use href="#d-note"/></svg><span class="border-start" style="height:12px;margin-right:-3px"></span><svg><use href="#d-wrench"/></svg>
      </div>
      <div class="fld flex-shrink-0" style="width:320px;padding-left:7px"><svg width="14" height="14"><use href="#d-mag"/></svg><span class="muted" style="margin-left:6px">Search...</span></div>
      <div class="box flex-grow-1" id="algs" style="width:320px"></div>
      <div class="d-flex flex-shrink-0" style="height:24px"><div class="stab" style="width:116px;background:#f8f8f8;line-height:24px">Processing Toolbox</div><div class="stab" style="width:67px;height:22px;background:#dcdcdc;border-left:0">Statistics</div></div>
    </section>
  </main>

  <footer class="status d-flex align-items-center flex-shrink-0" style="padding-left:4px;padding-top:1px">
    <div class="fld" style="width:200px;padding-left:7px"><svg width="14" height="14"><use href="#d-mag"/></svg><span class="muted" style="margin-left:6px;letter-spacing:-.1px">Type to locate (Ctrl+K)</span></div>
    <span style="margin-left:358px;width:57px">Coordinate</span>
    <div class="fld" style="width:97px;padding-left:6px;letter-spacing:-.25px">446089,4511408</div>
    <svg width="16" height="16" style="margin-left:4px;margin-right:12px"><g fill="#ddd" stroke="#333" stroke-width="1.200"><ellipse cx="5" cy="5" rx="3" ry="4.500" transform="rotate(-30 5 5)"/><ellipse cx="9" cy="10" rx="3.500" ry="4.500" transform="rotate(40 9 10)"/><path d="M9 5l5-4M3 2l5 7M11 7l3-1"/></g><circle cx="9.500" cy="11" r="1.500" fill="#333"/></svg>
    <span style="width:29px">Scale</span>
    <div class="fld" style="width:81px;padding-left:3px;letter-spacing:-.15px"><span class="flex-grow-1">1:25587</span><span class="spin d-flex align-items-center justify-content-center" style="width:20px"><svg width="10" height="5"><path d="M1 0h8L5 4.500z" fill="#555"/></svg></span></div>
    <svg width="14" height="16" style="margin:0 7px 0 11px"><path d="M3.500 8V5q0-4 3.500-4t3.500 4v3" fill="none" stroke="#999" stroke-width="1.800"/><rect x="1" y="7" width="12" height="8" rx="1.500" fill="#555"/></svg>
    <span style="width:48px;letter-spacing:-.5px">Magnifier</span>
    <div class="fld" style="width:84px;padding-left:4px;height:20px;letter-spacing:0"><span class="flex-grow-1">100%</span><span class="spin"><svg width="13" height="20"><path d="M2.500 8.500L6.500 4l4 4.500zM2.500 12.500l4 4.500 4-4.500z" fill="#555"/></svg></span></div>
    <span style="margin-left:8px;width:51px;letter-spacing:-.35px">Rotation</span>
    <div class="fld" style="width:84px;padding-left:4px;height:20px;letter-spacing:.3px"><span class="flex-grow-1">0.0 °</span><span class="spin"><svg width="13" height="20"><path d="M2.500 8.500L6.500 4l4 4.500zM2.500 12.500l4 4.500 4-4.500z" fill="#555"/></svg></span></div>
    <span class="chk" style="margin:0 5px 0 6px"><svg viewBox="0 0 11 11"><path d="M2 5l2.500 4L9 1.500" fill="none" stroke="#000" stroke-width="2"/></svg></span>
    <span style="width:51px;letter-spacing:-.4px">Render</span>
    <svg width="17" height="16"><circle cx="8" cy="8" r="6" fill="#aaa"/><path d="M1 8h14M2.500 4.500h11M2.500 11.500h11M8 1v14M8 2q-6 6 0 12M8 2q6 6 0 12" fill="none" stroke="#666" stroke-width=".8"/></svg>
    <span style="width:82px">EPSG:32633</span>
    <svg width="17" height="16"><path d="M8 1c5 0 8 3 8 6 0 2-1 4-3 5l2 3c-3 0-4-1-5-2-6 1-9-2-9-6s3-6 7-6z" fill="#555"/></svg>
    <svg class="ms-auto align-self-end" width="12" height="12"><path d="M9 2.500h2M6 5.500h5M3 8.500h8" stroke="#bbb" stroke-dasharray="1 2"/></svg>
  </footer>
</div>

<script src="https://cdn.jsdelivr.net/npm/bootstrap@5.3.0/dist/js/bootstrap.bundle.min.js"></script>
<script>
const use = id => `<svg><use href="#${id}"/></svg>`;

// Toolbars: "|" grip, "/" separator, suffix "-" disabled, "!" pressed, "v" with menu arrow
document.querySelectorAll('[data-tools]').forEach(bar => {
  bar.innerHTML = bar.dataset.tools.split(' ').map(t => {
    if (t === '|') return '<span class="grip"></span>';
    if (t === '/') return '<span class="vs"></span>';
    const dd = /(-v|deselv|rulerv)$/.test(t);
    if (dd) t = t.slice(0, -1);
    const off = t.endsWith('-'), on = t.endsWith('!');
    const id = t.replace(/[-!]$/, '');
    return `<span class="tool${on ? ' on' : ''}"><svg class="${off ? 'off' : ''}"><use href="#${id}"/></svg></span>` +
      (dd ? `<span class="dd${off ? ' dim' : ''}"></span>` : '');
  }).join('');
});

// Menu entries: markup, pitch to the next entry
const menu = [['Pro<u>j</u>ect',51],['<u>E</u>dit',34],['<u>V</u>iew',39],['<u>L</u>ayer',42],['<u>S</u>ettings',56],['<u>P</u>lugins',53],['Vect<u>o</u>r',47],['<u>R</u>aster',46],['<u>D</u>atabase',62],['<u>W</u>eb',38],['<u>M</u>esh',43],['Pro<u>c</u>essing',71],['<u>H</u>elp',40]];
document.getElementById('menu').innerHTML = menu.map(([t, w]) => `<a href="#" style="width:${w}px">${t}</a>`).join('');

// Browser tree: label, icon, depth, twisty state
const files = [['Ortigueira','d-folder',0,''],['Paper_Pia','d-folder',0,''],['Python_gdal','d-folder',0,''],['QGIS_Tutorials','d-fopen',0,'open'],['gis.osm_landuse_a_free_1.dbf','d-vec',1,'none'],['gis.osm_landuse_a_free_1.shp','d-vec',1,'none'],['S2_Neapel_sm2.tif','d-ras',1,'none'],['Review','d-folder',0,'']];
document.getElementById('files').innerHTML = files.map(([t, ic, d, s]) =>
  `<div class="trow" style="padding-left:${19 + d * 16}px;${ic === 'd-ras' ? 'background:#efefef' : ''}"><span class="tw ${s}"></span><span style="width:7px"></span>${use(ic)}<span style="margin-left:6px">${t}</span></div>`).join('');

const algs = ['Cartography','Database','File tools','GPS','Interpolation','Layer tools','Mesh','Network analysis','Plots','Raster analysis','Raster creation','Raster terrain analysis','Raster tools','Vector analysis','Vector creation','Vector general','Vector geometry','Vector overlay','Vector selection','Vector table','Vector tiles'].map(n => [n, 'q']);
algs.unshift(['Recently used', 'd-clock']);
algs.push(['GDAL','d-gdal'],['GRASS','d-grass'],['LAStools','d-las'],['SAGA','d-saga']);
document.getElementById('algs').innerHTML = algs.map(([t, ic]) =>
  `<div class="trow" style="padding-left:5px"><span class="tw"></span><span style="width:9px"></span>${use(ic)}<span style="margin-left:6px">${t}</span></div>`).join('');
</script>
</body>
</html>
